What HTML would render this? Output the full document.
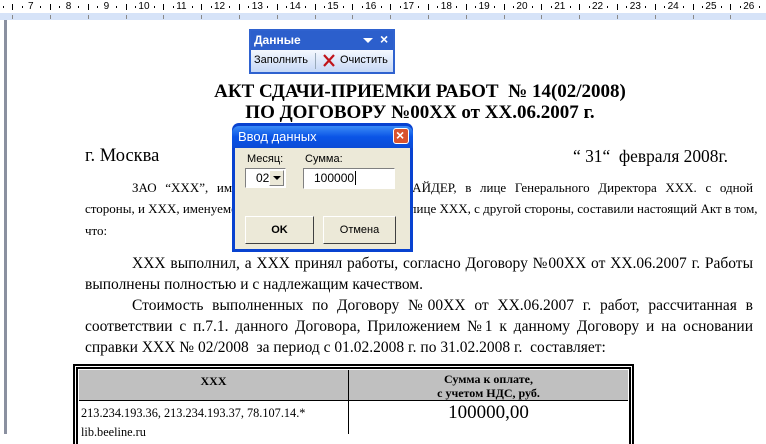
<!DOCTYPE html>
<html><head><meta charset="utf-8"><style>
*{margin:0;padding:0;box-sizing:border-box}
body{width:766px;height:434px;overflow:hidden;background:#fff;position:relative;font-family:"Liberation Serif",serif;color:#000}
.a{position:absolute;white-space:nowrap}
.ruler{position:absolute;left:0;top:0;width:766px;height:20px;background:#fff;border-bottom:7px solid #d6e3f8}
.rn{position:absolute;top:1px;font:10px "Liberation Sans",sans-serif;color:#000}
.t{font-weight:bold;font-size:19px;left:120px;width:600px;text-align:center}
.s{font-size:13px}
.m{font-size:15.5px}
.just{text-align:justify;text-align-last:justify;display:block}
.sans{font-family:"Liberation Sans",sans-serif}
</style></head><body>
<div class="ruler"></div>
<div id="rn"></div>
<div class="a" style="left:4px;top:20px;width:3px;height:414px;background:#8a90a0"></div>

<div class="a t" style="top:81px">АКТ СДАЧИ-ПРИЕМКИ РАБОТ&nbsp; № 14(02/2008)</div>
<div class="a t" style="top:102px">ПО ДОГОВОРУ №00ХХ от ХХ.06.2007 г.</div>
<div class="a" style="left:85px;top:146px;font-size:18.5px">г. Москва</div>
<div class="a" style="left:573px;top:146px;font-size:17.4px">“ 31“&nbsp; февраля 2008г.</div>

<div class="a s just" style="left:132px;top:180px;width:621px;white-space:normal">ЗАО “ХХХ”, именуемое в дальнейшем ПРОВАЙДЕР, в лице Генерального Директора ХХХ. с одной</div>
<div class="a s just" style="left:85px;top:201px;width:668px">стороны, и ХХХ, именуемое в дальнейшем ЗАКАЗЧИК, в лице ХХХ, с другой стороны, составили настоящий Акт в том,</div>
<div class="a s" style="left:85px;top:223px">что:</div>

<div class="a m just" style="left:132px;top:255px;width:621px">ХХХ выполнил, а ХХХ принял работы, согласно Договору №00ХХ от ХХ.06.2007 г. Работы</div>
<div class="a m" style="left:85px;top:276px">выполнены полностью и с надлежащим качеством.</div>
<div class="a m just" style="left:132px;top:297px;width:621px">Стоимость выполненных по Договору №00ХХ от ХХ.06.2007 г. работ, рассчитанная в</div>
<div class="a m just" style="left:85px;top:318px;width:668px">соответствии с п.7.1. данного Договора, Приложением №1 к данному Договору и на основании</div>
<div class="a m" style="left:85px;top:339px">справки ХХХ № 02/2008&nbsp; за период с 01.02.2008 г. по 31.02.2008 г.&nbsp; составляет:</div>

<!-- table -->
<div class="a" style="left:73px;top:364px;width:561px;height:80px;border:4px double #000;border-width:5px 5px 0 5px"></div>
<div class="a" style="left:79px;top:370px;width:549px;height:31px;background:#c0c0c0;border-bottom:1px solid #000"></div>
<div class="a" style="left:348px;top:370px;width:1px;height:64px;background:#000"></div>
<div class="a" style="left:79px;top:374px;width:269px;text-align:center;font-size:12px;font-weight:bold">ХХХ</div>
<div class="a" style="left:349px;top:372px;width:279px;text-align:center;font-size:12px;font-weight:bold;line-height:14px">Сумма к оплате,<br>с учетом НДС, руб.</div>
<div class="a" style="left:81px;top:404px;font-size:12.3px;line-height:19px">213.234.193.36, 213.234.193.37, 78.107.14.*<br>lib.beeline.ru</div>
<div class="a" style="left:349px;top:402px;width:279px;text-align:center;font-size:19px">100000,00</div>

<!-- toolbar -->
<div class="a" style="left:249px;top:29px;width:146px;height:45px;background:#3a6fd8;border:2px solid #2f62cf"></div>
<div class="a" style="left:251px;top:31px;width:142px;height:19px;background:#2c5fcc"></div>
<div class="a sans" style="left:254px;top:33px;font-size:12px;font-weight:bold;color:#fff">Данные</div>
<div class="a" style="left:363px;top:38px;width:0;height:0;border-left:5px solid transparent;border-right:5px solid transparent;border-top:5px solid #fff"></div>
<div class="a sans" style="left:380px;top:31px;font-size:14px;font-weight:bold;color:#fff">×</div>
<div class="a" style="left:251px;top:50px;width:142px;height:22px;background:linear-gradient(#f4f8fe,#c6d8f6)"></div>
<div class="a sans" style="left:254px;top:54px;font-size:11px">Заполнить</div>
<div class="a" style="left:315px;top:53px;width:1px;height:16px;background:#9ab"></div>
<svg class="a" style="left:322px;top:53px" width="14" height="15"><path d="M2 2 L12 13 M12 2 L2 13" stroke="#c0141a" stroke-width="2.2"/></svg>
<div class="a sans" style="left:340px;top:54px;font-size:11px">Очистить</div>

<!-- dialog -->
<div class="a" style="left:232px;top:123px;width:181px;height:129px;background:#0842d0;border-radius:7px 7px 0 0"></div>
<div class="a" style="left:232px;top:126px;width:181px;height:22px;background:linear-gradient(#3b8cf7,#0a54e6 50%,#0b4bd6);border-radius:7px 7px 0 0"></div>
<div class="a sans" style="left:238px;top:129px;font-size:13px;color:#fff">Ввод данных</div>
<div class="a" style="left:393px;top:128px;width:16px;height:16px;background:#d9532e;border:1px solid #fff;border-radius:3px"></div>
<div class="a sans" style="left:396px;top:127px;font-size:14px;font-weight:bold;color:#fff">×</div>
<div class="a" style="left:235px;top:148px;width:175px;height:101px;background:#ece9d8"></div>
<div class="a sans" style="left:247px;top:153px;font-size:11px">Месяц:</div>
<div class="a sans" style="left:305px;top:153px;font-size:11px">Сумма:</div>
<div class="a" style="left:245px;top:168px;width:41px;height:20px;background:#fff;border:1px solid;border-color:#808080 #fff #fff #808080"></div>
<div class="a sans" style="left:256px;top:171px;font-size:12px">02</div>
<div class="a" style="left:269px;top:170px;width:15px;height:16px;background:#ece9d8;border:1px solid;border-color:#fff #808080 #808080 #fff"></div>
<div class="a" style="left:273px;top:176px;border-left:4px solid transparent;border-right:4px solid transparent;border-top:4px solid #000"></div>
<div class="a" style="left:303px;top:168px;width:92px;height:21px;background:#fff;border:1px solid;border-color:#808080 #fff #fff #808080"></div>
<div class="a sans" style="left:314px;top:171px;font-size:12px">100000<span style="border-left:1px solid #000;margin-left:1px"></span></div>
<div class="a sans" style="left:245px;top:216px;width:69px;height:28px;border:1px solid;border-color:#fff #404040 #404040 #fff;background:#ece9d8;text-align:center;font-size:11px;font-weight:bold;line-height:26px">OK</div>
<div class="a sans" style="left:323px;top:216px;width:73px;height:28px;border:1px solid;border-color:#fff #404040 #404040 #fff;background:#ece9d8;text-align:center;font-size:11px;line-height:26px">Отмена</div>

<script>
var r=document.getElementById('rn'),h='';
for(var n=6;n<=27;n++){var x=31+(n-7)*37.8;
h+='<div class="rn" style="left:'+(x-(n>9?6:3))+'px">'+n+'</div>';
[9.45,18.9,28.35].forEach(function(d){var xx=x+d;h+='<div class="a" style="left:'+xx+'px;top:'+(d==18.9?4:6)+'px;width:1px;height:'+(d==18.9?6:2)+'px;background:#000"></div>';});
h+='<div class="a" style="left:'+(x+18.9)+'px;top:15px;width:1px;height:4px;background:#888"></div>';}
r.innerHTML=h;
</script>
</body></html>
